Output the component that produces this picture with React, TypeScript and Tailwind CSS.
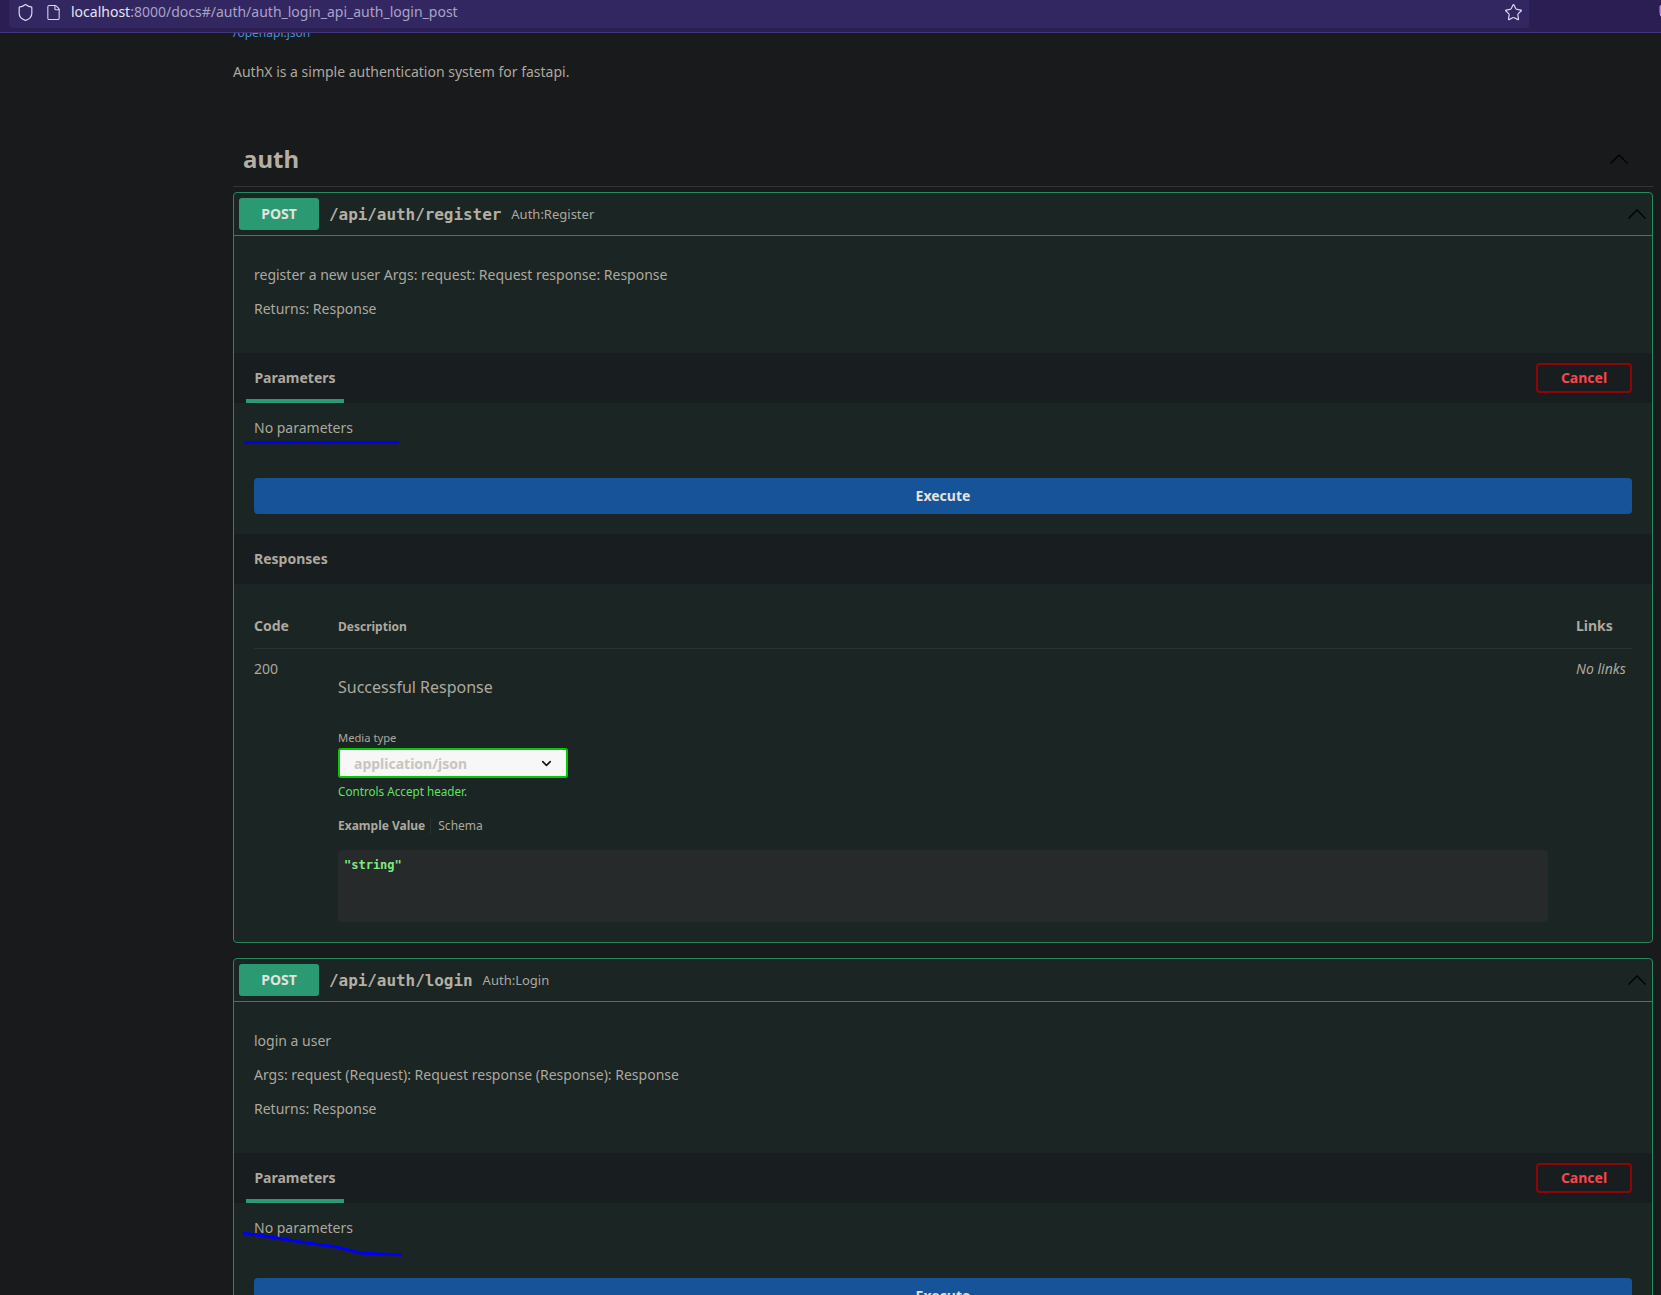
import React from 'react';
import { ChevronDown, File, Shield, Star } from 'lucide-react';

const Caret: React.FC = () => (
  <svg width="18" height="10" viewBox="0 0 18 10" fill="none" stroke="#000" strokeWidth="1.3">
    <polyline points="0.5,9.5 9,1 17.5,9.5" />
  </svg>
);

const Underline: React.FC<{ points: string }> = ({ points }) => (
  <svg className="absolute left-0 top-0 pointer-events-none" width="180" height="60" fill="none" stroke="#0000f5" strokeWidth="3">
    <polyline points={points} />
  </svg>
);

interface EndpointProps {
  path: string;
  name: string;
  lines: string[];
  scribble: string;
  full?: boolean;
}

const Endpoint: React.FC<EndpointProps> = ({ path, name, lines, scribble, full }) => (
  <div className="border border-[#26885f] rounded-[4px] bg-[#1a2524]">
    <div className="h-[43px] border-b border-[#26885f] flex items-center pl-[5px] pr-[6px] pb-[1px]">
      <span className="w-[80px] h-[32px] rounded-[3px] bg-[#2b9a73] flex items-center justify-center pb-[1px] text-[14px] font-bold text-[#e4e2de]">POST</span>
      <span className="ml-[10px] pt-[2px] font-['DejaVu_Sans_Mono',monospace] text-[16px] font-bold tracking-[-0.06px] text-[#b4afa5]">{path}</span>
      <span className="ml-[10px] pt-[2px] text-[13px] text-[#aea89e]">{name}</span>
      <span className="ml-auto"><Caret /></span>
    </div>

    <div className="pt-[28px] pb-[33px] px-5 flex flex-col gap-3 text-[14px] leading-[22px]">
      {lines.map((line) => (
        <p key={line}>{line}</p>
      ))}
    </div>

    <div className="h-[50px] bg-[#181e1f] flex items-center justify-between pl-3 pr-5">
      <div className="h-full w-[98px] border-b-4 border-[#2b9a73] flex items-center justify-center pt-[3px] text-[14px] font-bold">Parameters</div>
      <button className="w-[96px] h-[30px] pb-[1px] border-2 border-[#8f0505] rounded-[4px] text-[14px] font-bold text-[#f4474c]">Cancel</button>
    </div>

    <div className="relative px-5 pt-[15px] pb-5">
      <Underline points={scribble} />
      <p className="text-[14px] leading-5">No parameters</p>
      <button className="mt-10 w-full h-9 pb-[1px] rounded-[4px] bg-[#175398] text-[14px] font-bold text-[#e4e2de]">Execute</button>
    </div>

    {full && (
      <>
        <div className="h-[50px] bg-[#181e1f] flex items-center pb-[1px] px-5 text-[14px] font-bold">Responses</div>
        <div className="px-5 pt-[31px] pb-5">
          <div className="flex items-center pb-[11px] border-b border-[#2a332f] text-[14px] font-bold leading-5">
            <span className="w-[84px]">Code</span>
            <span className="flex-1 text-[12px] pt-[2px]">Description</span>
            <span className="w-[56px]">Links</span>
          </div>
          <div className="flex pt-[10px]">
            <span className="w-[84px] text-[14px] leading-5">200</span>
            <div className="flex-1 mr-[28px]">
              <p className="mt-[17px] text-[16px] leading-[22px]">Successful Response</p>
              <p className="mt-8 text-[11.2px] leading-4">Media type</p>
              <div className="mt-[2px] w-[230px] h-[30px] border-2 border-[#06c906] rounded-[3px] bg-[#f7f7f7] flex items-center justify-between pl-[14px] pr-[12px]">
                <span className="text-[14px] font-bold text-[#c9c5be]">application/json</span>
                <ChevronDown size={15} strokeWidth={2.5} className="text-[#111]" />
              </div>
              <p className="mt-[5px] text-[11.7px] leading-4 text-[#5fe35f]">Controls Accept header.</p>
              <div className="mt-[19px] flex items-center text-[12px] leading-4">
                <span className="font-bold pr-[5px] border-r border-[#28312f]">Example Value</span>
                <span className="pl-[7px]">Schema</span>
              </div>
              <div className="mt-4 h-[72px] rounded-[4px] bg-[#272a2b] px-[6px] pt-[6px] font-['DejaVu_Sans_Mono',monospace] text-[12px] font-bold leading-[18px] text-[#7fea7f]">"string"</div>
            </div>
            <span className="w-[56px] text-[14px] leading-5 italic">No links</span>
          </div>
        </div>
      </>
    )}
  </div>
);

const App: React.FC = () => {
  return (
    <div className="h-[1295px] overflow-hidden bg-[#181a1c] font-['Noto_Sans',sans-serif] text-[#aea89e]">
      {/* browser chrome */}
      <div className="relative z-10 h-[33px] bg-[#2b1e52] border-b border-[#46367f] flex items-start overflow-hidden">
        <div className="ml-[9px] w-[1520px] shrink-0 h-[28px] pb-[4px] rounded-b-[4px] bg-[#322760] flex items-center text-[#ddd8f0]">
          <Shield size={19} strokeWidth={1.5} className="ml-[7px]" />
          <File size={17} strokeWidth={1.5} className="ml-[10px]" />
          <span className="ml-[9px] -mt-[2px] text-[14px] text-[#a9a2c9]"><span className="text-[#e6e3f5]">localhost</span>:8000/docs#/auth/auth_login_api_auth_login_post</span>
          <Star size={19} strokeWidth={1.5} className="ml-auto mr-[6px]" />
        </div>
        <Shield size={19} strokeWidth={1.5} className="ml-[128px] mt-[2px] shrink-0 text-[#c9a6f5]" />
      </div>

      <div className="pl-[233px] pr-[8px] -mt-[9px]">
        <a className="block text-[12px] leading-[18px] text-[#4a90d9]">/openapi.json</a>
        <p className="mt-[19px] text-[14px] leading-[22px]">AuthX is a simple authentication system for fastapi.</p>

        <div className="mt-[51px] h-[53px] pl-[10px] pr-[25px] pb-[3px] border-b border-[#333536] flex items-center justify-between">
          <h2 className="text-[24px] font-bold leading-8 text-[#b4aea4]">auth</h2>
          <Caret />
        </div>

        <div className="mt-[5px] flex flex-col gap-[15px]">
          <Endpoint
            path="/api/auth/register"
            name="Auth:Register"
            lines={['register a new user Args: request: Request response: Response', 'Returns: Response']}
            scribble="10,39.5 165,39.5"
            full
          />
          <Endpoint
            path="/api/auth/login"
            name="Auth:Login"
            lines={['login a user', 'Args: request (Request): Request response (Response): Response', 'Returns: Response']}
            scribble="9,30 43,35 73,40 103,44 126,50 168,52"
          />
        </div>
      </div>
    </div>
  );
};

export default App;
